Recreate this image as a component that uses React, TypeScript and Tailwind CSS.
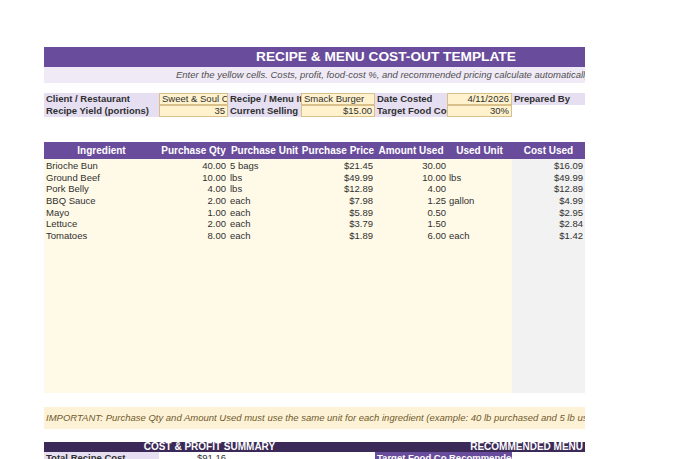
import React from 'react';

type Row = {
  name: string;
  qty: string;
  unit: string;
  price: string;
  used: string;
  usedUnit: string;
  cost: string;
};

const rows: Row[] = [
  { name: 'Brioche Bun', qty: '40.00', unit: '5 bags', price: '$21.45', used: '30.00', usedUnit: '', cost: '$16.09' },
  { name: 'Ground Beef', qty: '10.00', unit: 'lbs', price: '$49.99', used: '10.00', usedUnit: 'lbs', cost: '$49.99' },
  { name: 'Pork Belly', qty: '4.00', unit: 'lbs', price: '$12.89', used: '4.00', usedUnit: '', cost: '$12.89' },
  { name: 'BBQ Sauce', qty: '2.00', unit: 'each', price: '$7.98', used: '1.25', usedUnit: 'gallon', cost: '$4.99' },
  { name: 'Mayo', qty: '1.00', unit: 'each', price: '$5.89', used: '0.50', usedUnit: '', cost: '$2.95' },
  { name: 'Lettuce', qty: '2.00', unit: 'each', price: '$3.79', used: '1.50', usedUnit: '', cost: '$2.84' },
  { name: 'Tomatoes', qty: '8.00', unit: 'each', price: '$1.89', used: '6.00', usedUnit: 'each', cost: '$1.42' },
];

const headers = ['Ingredient', 'Purchase Qty', 'Purchase Unit', 'Purchase Price', 'Amount Used', 'Used Unit', 'Cost Used'];

const cols = 'grid grid-cols-[115px_69px_73px_74px_72px_65px_73px]';

const Label: React.FC<{ children: React.ReactNode }> = ({ children }) => (
  <div className="bg-[#e6dff1] font-bold px-[2px] whitespace-nowrap overflow-hidden">{children}</div>
);

const Input: React.FC<{ children: React.ReactNode; right?: boolean }> = ({ children, right }) => (
  <div
    className={`bg-[#fff2cc] border border-[#d9c08a] px-[2px] whitespace-nowrap overflow-hidden leading-[10px] ${
      right ? 'text-right' : ''
    }`}
  >
    {children}
  </div>
);

const App: React.FC = () => {
  return (
    <div className="w-[680px] h-[459px] bg-white overflow-hidden font-['Liberation_Sans',Arial,sans-serif] text-[9.5px] text-[#303030]">
      <div className="ml-[44px] w-[541px] pt-[47px]">
        {/* Title */}
        <div className="h-[20px] bg-[#6a4c9c] text-white font-bold text-[13.7px] leading-[20px] pl-[212px] whitespace-nowrap overflow-hidden">
          RECIPE &amp; MENU COST-OUT TEMPLATE
        </div>
        <div className="h-[16px] bg-[#efeaf6] italic text-[#505050] leading-[16px] pl-[132px] whitespace-nowrap overflow-hidden">
          Enter the yellow cells. Costs, profit, food-cost %, and recommended pricing calculate automatically.
        </div>

        {/* Info */}
        <div className={`${cols} mt-[10px] leading-[12px]`}>
          <Label>Client / Restaurant</Label>
          <Input>Sweet &amp; Soul Catering</Input>
          <Label>Recipe / Menu Item</Label>
          <Input>Smack Burger</Input>
          <Label>Date Costed</Label>
          <Input right>4/11/2026</Input>
          <Label>Prepared By</Label>

          <Label>Recipe Yield (portions)</Label>
          <Input right>35</Input>
          <Label>Current Selling Price</Label>
          <Input right>$15.00</Input>
          <Label>Target Food Cost %</Label>
          <Input right>30%</Input>
          <div />
        </div>

        {/* Ingredient table */}
        <div className={`${cols} mt-[25px] h-[17px] bg-[#6a4c9c] text-white font-bold text-[10px] leading-[17px] text-center`}>
          {headers.map((h) => (
            <div key={h} className="whitespace-nowrap overflow-hidden">
              {h}
            </div>
          ))}
        </div>
        <div className="flex">
          <div className="w-[468px] bg-[#fffae8] h-[234px] pt-[1px]">
            {rows.map((r) => (
              <div key={r.name} className="grid grid-cols-[115px_69px_73px_74px_72px_65px] h-[11.67px] leading-[11.67px]">
                <div className="pl-[2px] whitespace-nowrap">{r.name}</div>
                <div className="text-right pr-[2px]">{r.qty}</div>
                <div className="pl-[2px]">{r.unit}</div>
                <div className="text-right pr-[2px]">{r.price}</div>
                <div className="text-right pr-[1px]">{r.used}</div>
                <div className="pl-[2px]">{r.usedUnit}</div>
              </div>
            ))}
          </div>
          <div className="w-[73px] bg-[#f2f2f2] h-[234px] pt-[1px]">
            {rows.map((r) => (
              <div key={r.name} className="h-[11.67px] leading-[11.67px] text-right pr-[2px]">
                {r.cost}
              </div>
            ))}
          </div>
        </div>

        {/* Note */}
        <div className="mt-[14px] h-[22px] bg-[#fef2d6] italic text-[#6e5a2e] leading-[22px] pl-[2px] whitespace-nowrap overflow-hidden">
          IMPORTANT: Purchase Qty and Amount Used must use the same unit for each ingredient (example: 40 lb purchased and 5 lb used).
        </div>

        {/* Summary */}
        <div className="mt-[13px] h-[10px] bg-[#3b2a57] text-white font-bold text-[10px] leading-[10px] flex">
          <div className="w-[331px] text-center">COST &amp; PROFIT SUMMARY</div>
          <div className="flex-1 text-right pr-[2px]">RECOMMENDED MENU</div>
        </div>
        <div className={`${cols} h-[12px] leading-[12px]`}>
          <div className="bg-[#e6dff1] font-bold pl-[2px] whitespace-nowrap overflow-hidden">Total Recipe Cost</div>
          <div className="text-right pr-[2px]">$91.16</div>
          <div />
          <div />
          <div className="bg-[#6a4c9c] text-white font-bold pl-[2px] whitespace-nowrap overflow-hidden">Target Food Cost %</div>
          <div className="bg-[#6a4c9c] text-white font-bold pl-[2px] whitespace-nowrap overflow-hidden">Recommended</div>
          <div />
        </div>
      </div>
    </div>
  );
};

export default App;
